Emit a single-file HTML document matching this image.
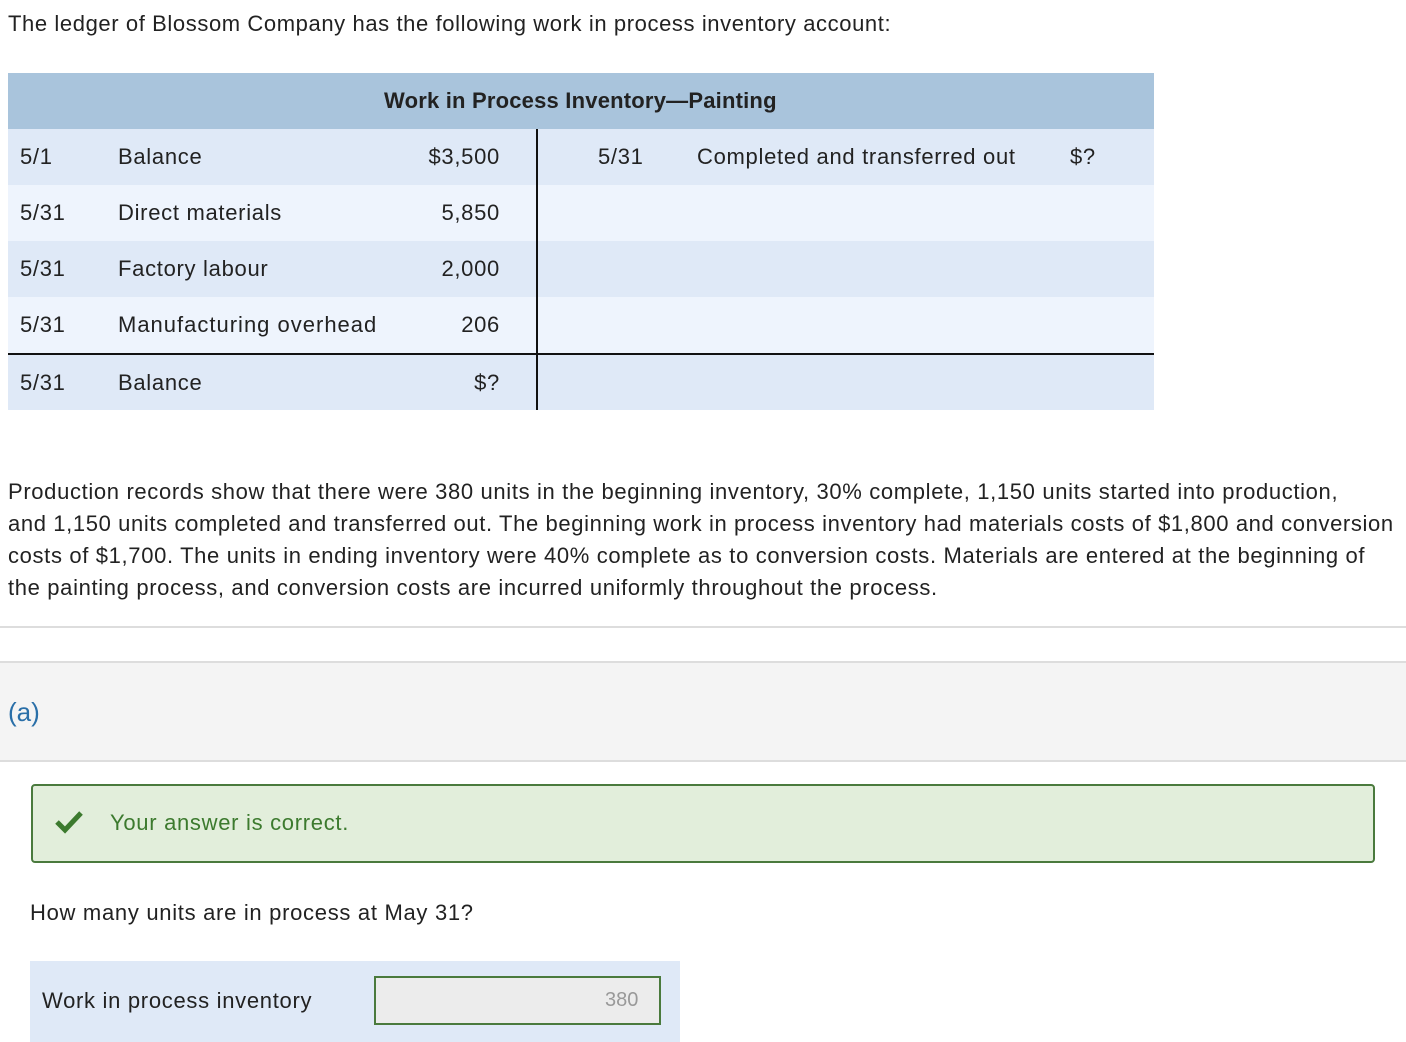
<!DOCTYPE html>
<html><head><meta charset="utf-8"><style>
body{margin:0;width:1406px;height:1042px;background:#fff;font-family:"Liberation Sans",sans-serif;color:#222;position:relative;overflow:hidden;font-size:22px;letter-spacing:0.7px}
.a{position:absolute;white-space:nowrap}
.r{position:absolute;left:8px;width:1146px;height:56px}
.t{position:absolute;line-height:56px}
</style></head><body>
<div class="a" style="left:8px;top:11px;letter-spacing:0.6px">The ledger of Blossom Company has the following work in process inventory account:</div>
<div class="r" style="top:73px;background:#a9c4dc"><div class="t" style="left:376px;font-weight:bold;letter-spacing:0.2px">Work in Process Inventory—Painting</div></div>
<div class="r" style="top:129px;background:#dfe9f7">
<div class="t" style="left:12px">5/1</div><div class="t" style="left:110px">Balance</div><div class="t" style="right:654px">$3,500</div>
<div class="t" style="left:590px">5/31</div><div class="t" style="left:689px">Completed and transferred out</div><div class="t" style="left:1062px">$?</div></div>
<div class="r" style="top:185px;background:#eef4fd"><div class="t" style="left:12px">5/31</div><div class="t" style="left:110px">Direct materials</div><div class="t" style="right:654px">5,850</div></div>
<div class="r" style="top:241px;background:#dfe9f7"><div class="t" style="left:12px">5/31</div><div class="t" style="left:110px">Factory labour</div><div class="t" style="right:654px">2,000</div></div>
<div class="r" style="top:297px;background:#eef4fd"><div class="t" style="left:12px">5/31</div><div class="t" style="left:110px;letter-spacing:1px">Manufacturing overhead</div><div class="t" style="right:654px">206</div></div>
<div class="r" style="top:353px;height:57px;background:#dfe9f7;border-top:2px solid #111;box-sizing:border-box"><div class="t" style="left:12px;line-height:55px">5/31</div><div class="t" style="left:110px;line-height:55px">Balance</div><div class="t" style="right:654px;line-height:55px">$?</div></div>
<div class="a" style="left:536px;top:129px;width:2px;height:281px;background:#111"></div>
<div class="a" style="left:8px;top:476px;line-height:32px;white-space:nowrap;letter-spacing:0.65px">Production records show that there were 380 units in the beginning inventory, 30% complete, 1,150 units started into production,<br><span style="letter-spacing:0.62px">and 1,150 units completed and transferred out. The beginning work in process inventory had materials costs of $1,800 and conversion</span><br>costs of $1,700. The units in ending inventory were 40% complete as to conversion costs. Materials are entered at the beginning of<br>the painting process, and conversion costs are incurred uniformly throughout the process.</div>
<div class="a" style="left:0;top:626px;width:1406px;height:2px;background:#ddd"></div>
<div class="a" style="left:0;top:661px;width:1406px;height:97px;background:#f4f4f4;border-top:2px solid #ddd;border-bottom:2px solid #ddd"></div>
<div class="a" style="left:8px;top:697px;font-size:26px;color:#2a6fa8;letter-spacing:0">(a)</div>
<div class="a" style="left:31px;top:784px;width:1340px;height:75px;background:#e2eedb;border:2px solid #4a7a3d;border-radius:4px"></div>
<svg class="a" style="left:54px;top:810px" width="30" height="24" viewBox="0 0 30 24"><path d="M3 12 L11 20 L27 3" fill="none" stroke="#3c7a2e" stroke-width="5"/></svg>
<div class="a" style="left:110px;top:810px;color:#3c7a2e">Your answer is correct.</div>
<div class="a" style="left:30px;top:900px">How many units are in process at May 31?</div>
<div class="a" style="left:30px;top:961px;width:650px;height:81px;background:#dfe9f7"></div>
<div class="a" style="left:42px;top:988px">Work in process inventory</div>
<div class="a" style="left:374px;top:976px;width:283px;height:45px;background:#ececec;border:2px solid #4a7a3d"></div>
<div class="a" style="left:605px;top:989px;color:#999;font-size:20px;letter-spacing:0">380</div>
</body></html>
